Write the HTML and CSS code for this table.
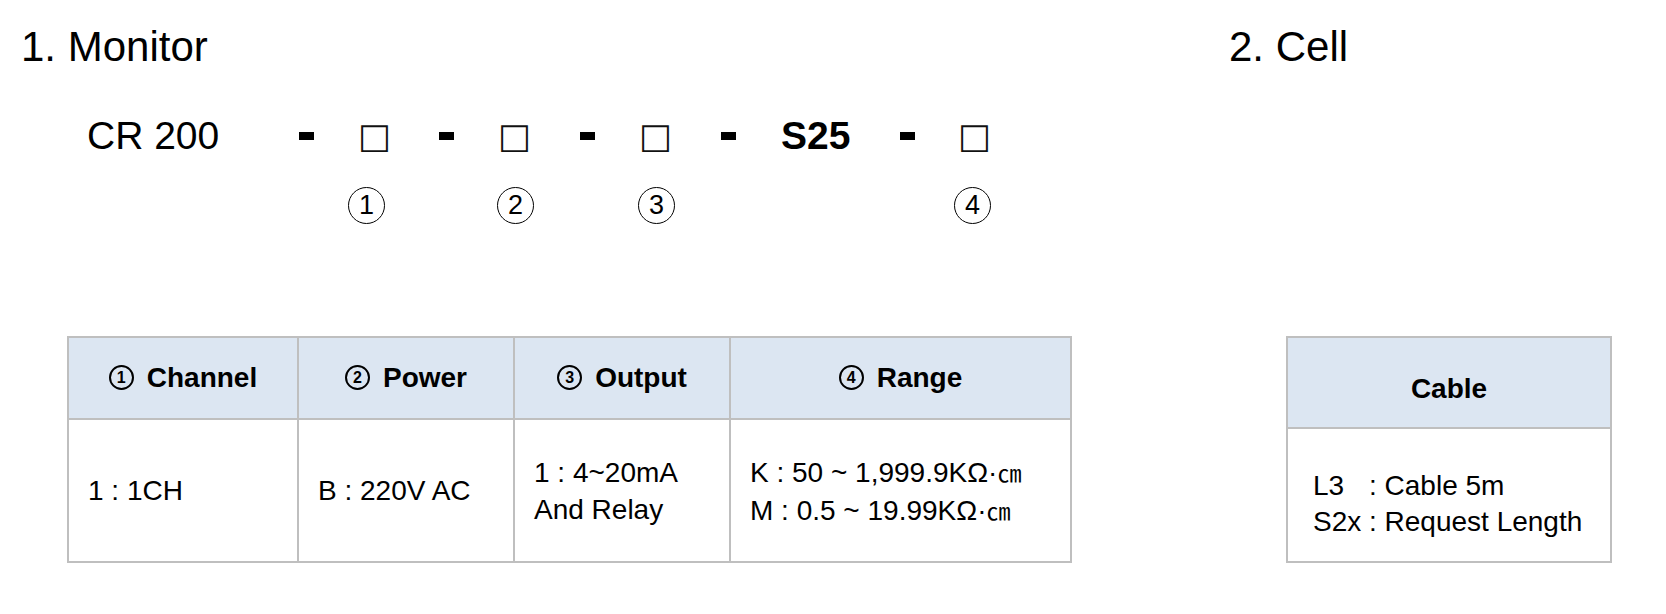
FILE: index.html
```html
<!DOCTYPE html>
<html lang="en">
<head>
<meta charset="utf-8">
<title>Ordering Information</title>
<link rel="stylesheet" href="styles.css">
</head>
<body>
<div class="page">
  <h1 class="title title-monitor">1. Monitor</h1>
  <h1 class="title title-cell">2. Cell</h1>

  <div class="code">
    <span class="model">CR 200</span>
    <span class="dash"></span>
    <span class="box">□</span>
    <span class="dash"></span>
    <span class="box">□</span>
    <span class="dash"></span>
    <span class="box">□</span>
    <span class="dash"></span>
    <span class="fixed">S25</span>
    <span class="dash"></span>
    <span class="box">□</span>

    <span class="num n1">1</span>
    <span class="num n2">2</span>
    <span class="num n3">3</span>
    <span class="num n4">4</span>
  </div>

  <table class="spec monitor-table">
    <colgroup>
      <col class="c1"><col class="c2"><col class="c3"><col class="c4">
    </colgroup>
    <tr class="head-row">
      <th><span class="hc">1</span>Channel</th>
      <th><span class="hc">2</span>Power</th>
      <th><span class="hc">3</span>Output</th>
      <th><span class="hc">4</span>Range</th>
    </tr>
    <tr class="body-row">
      <td>1 : 1CH</td>
      <td>B : 220V AC</td>
      <td>1 : 4~20mA<br>And Relay</td>
      <td>K : 50 ~ 1,999.9KΩ·<span class="unit">㎝</span><br>M : 0.5 ~ 19.99KΩ·<span class="unit">㎝</span></td>
    </tr>
  </table>

  <table class="spec cell-table">
    <tr class="head-row">
      <th>Cable</th>
    </tr>
    <tr class="body-row">
      <td>
        <div><span class="lbl">L3</span>: Cable 5m</div>
        <div><span class="lbl">S2x</span>: Request Length</div>
      </td>
    </tr>
  </table>
</div>
</body>
</html>
```

FILE: styles.css
```css
html, body {
  margin: 0;
  padding: 0;
  background: #ffffff;
}

body {
  font-family: "Liberation Sans", Arial, sans-serif;
  color: #000000;
}

.page {
  display: grid;
  grid-template-columns: 1208px 1fr;
  grid-template-areas:
    "t1 t2"
    "code ."
    "mt ct";
  padding: 26px 0 0 21px;
}

.title {
  margin: 0;
  font-size: 42px;
  line-height: 42px;
  font-weight: normal;
}

.title-monitor { grid-area: t1; }
.title-cell { grid-area: t2; }

/* ---------- model code ---------- */
.code {
  grid-area: code;
  margin: 48px 0 0 66px;
  display: grid;
  grid-template-columns: 212px 64px 76px 64px 77px 64px 77px 60px 119px 63px 25px;
  grid-template-rows: 40px 37px;
  row-gap: 31px;
  align-items: center;
  justify-items: start;
}

.model {
  grid-row: 1;
  font-size: 39px;
  line-height: 40px;
}

.fixed {
  grid-row: 1;
  font-size: 39px;
  line-height: 40px;
  font-weight: bold;
}

.dash {
  grid-row: 1;
  width: 15px;
  height: 8px;
  background: #000;
}

.box {
  grid-row: 1;
  font-family: "DejaVu Sans", sans-serif;
  font-size: 35px;
  font-weight: bold;
  line-height: 40px;
  margin-left: -5px;
  color: #111;
}

.num {
  grid-row: 2;
  box-sizing: border-box;
  width: 37px;
  height: 37px;
  border: 1.5px solid #000;
  border-radius: 50%;
  display: flex;
  align-items: center;
  justify-content: center;
  font-size: 27px;
  line-height: 1;
  margin-left: -6px;
}

.n1 { grid-column: 3; margin-left: -15px; }
.n2 { grid-column: 5; }
.n3 { grid-column: 7; }
.n4 { grid-column: 11; margin-left: -9px; }

/* ---------- tables ---------- */
.spec {
  border-collapse: separate;
  border-spacing: 0;
  table-layout: fixed;
  border-top: 2px solid #bfbfbf;
  border-left: 2px solid #bfbfbf;
  margin-top: 112px;
  font-size: 28px;
}

.spec th,
.spec td {
  border-right: 2px solid #bfbfbf;
  border-bottom: 2px solid #bfbfbf;
  padding: 0;
  vertical-align: middle;
}

.spec th {
  background: #dce6f2;
  font-weight: bold;
  text-align: center;
}

.spec td {
  text-align: left;
  font-weight: normal;
}

.monitor-table {
  grid-area: mt;
  margin-left: 46px;
  width: 1005px;
}

.monitor-table .c1 { width: 230px; }
.monitor-table .c2 { width: 216px; }
.monitor-table .c3 { width: 216px; }
.monitor-table .c4 { width: 341px; }

.monitor-table .head-row { height: 82px; }
.monitor-table .body-row { height: 143px; }

.monitor-table td {
  padding-left: 19px;
  line-height: 37px;
}

.hc {
  display: inline-block;
  box-sizing: border-box;
  width: 25px;
  height: 25px;
  border: 2px solid #000;
  border-radius: 50%;
  font-size: 16px;
  line-height: 21px;
  text-align: center;
  vertical-align: 4px;
  margin-right: 13px;
}

.unit {
  font-family: "Noto Sans CJK KR", "Noto Sans CJK SC", sans-serif;
  font-size: 24px;
}

.cell-table {
  grid-area: ct;
  margin-left: 57px;
  width: 326px;
}

.cell-table .head-row { height: 90px; }
.cell-table .body-row { height: 133px; }

.cell-table th {
  padding-top: 14px;
}

.cell-table td {
  padding: 18px 0 0 25px;
  line-height: 36px;
}

.lbl {
  display: inline-block;
  width: 56px;
}
```
